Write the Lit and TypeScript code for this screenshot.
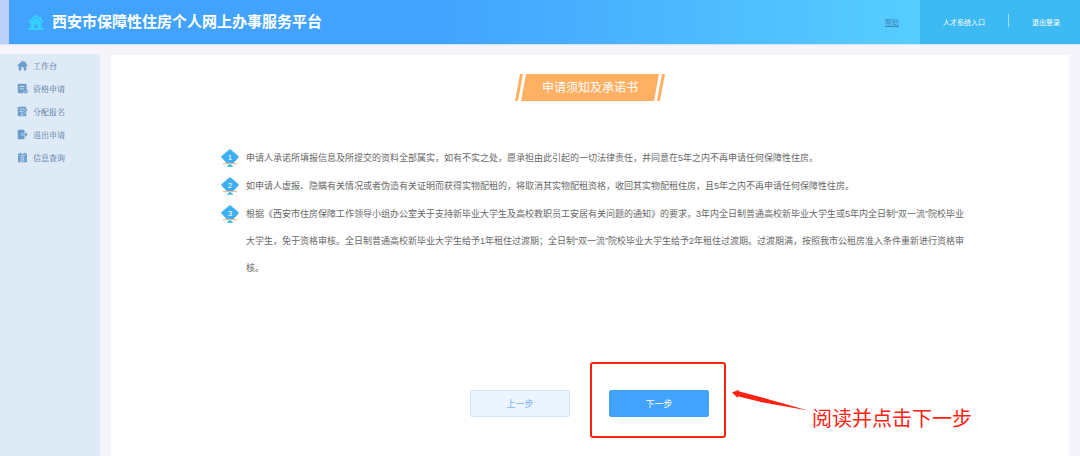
import { LitElement, html, css, svg } from "lit";
import { customElement } from "lit/decorators.js";

const house = svg`<path d="M8 .8.7 7.600c-.5.5-.2 1.100.4 1.100h1.300v5.600c0 .6.4.9.9.9h3V10.500h3.400v4.700h3c.5 0 .9-.3.9-.9V8.700h1.300c.6 0 .9-.6.4-1.100L13 5.300V2h-2v1.500z" fill="currentColor"/>`;

const menu = [
  { label: "工作台", icon: house },
  {
    label: "资格申请",
    icon: svg`<path d="M3 1h9a2 2 0 0 1 2 2v6l-4 1.500-1 4.500H3a2 2 0 0 1-2-2V3a2 2 0 0 1 2-2z" fill="currentColor"/>
      <path d="M4 5h7M4 8.500h6" stroke="#deeaf6" stroke-width="1.200"/>
      <circle cx="12.500" cy="12" r="3.200" fill="currentColor"/><path d="m10.800 12 1.400 1.400 2.300-2.400" stroke="#deeaf6" fill="none"/>`,
  },
  {
    label: "分配报名",
    icon: svg`<path d="M2.500 1H12a1.500 1.500 0 0 1 1.500 1.500V14a1 1 0 0 1-1 1h-10A1.500 1.500 0 0 1 1 13.500v-11A1.500 1.500 0 0 1 2.500 1z" fill="currentColor"/>
      <path d="M3.500 4.500h7M3.500 8h4" stroke="#deeaf6" stroke-width="1.200"/>
      <path d="m6 14 1-3.500 6.500-7 2.200 2L9.200 12.800z" fill="currentColor" stroke="#deeaf6" stroke-width=".9"/>`,
  },
  {
    label: "退出申请",
    icon: svg`<path d="M2 1h8a1 1 0 0 1 1 1v12a1 1 0 0 1-1 1H2a1 1 0 0 1-1-1V2a1 1 0 0 1 1-1z" fill="currentColor"/>
      <path d="M7 6.700h4.500V3.800L16 8l-4.500 4.200V9.300H7z" fill="currentColor" stroke="#deeaf6" stroke-width=".8"/>`,
  },
  {
    label: "信息查询",
    icon: svg`<path d="M1.500 2.500H4V1h2v1.500h4V1h2v1.500h2.500V15h-13z" fill="currentColor"/>
      <path d="M4 5h8" stroke="#deeaf6"/><circle cx="7.800" cy="9" r="2" fill="none" stroke="#deeaf6"/>
      <path d="m9.300 10.500 1.500 1.500M4.500 13h6" stroke="#deeaf6"/>`,
  },
];

const terms = [
  "申请人承诺所填报信息及所提交的资料全部属实，如有不实之处，愿承担由此引起的一切法律责任，并同意在5年之内不再申请任何保障性住房。",
  "如申请人虚报、隐瞒有关情况或者伪造有关证明而获得实物配租的，将取消其实物配租资格，收回其实物配租住房，且5年之内不再申请任何保障性住房。",
  "根据《西安市住房保障工作领导小组办公室关于支持新毕业大学生及高校教职员工安居有关问题的通知》的要求，3年内全日制普通高校新毕业大学生或5年内全日制“双一流”院校毕业大学生，免于资格审核。全日制普通高校新毕业大学生给予1年租住过渡期；全日制“双一流”院校毕业大学生给予2年租住过渡期。过渡期满，按照我市公租房准入条件重新进行资格审核。",
];

@customElement("app-root")
export class AppRoot extends LitElement {
  static styles = css`
    :host {
      display: flex;
      flex-direction: column;
      min-height: 100vh;
      background: #f4f4fa;
      font-family: "Liberation Sans", "Noto Sans CJK SC", sans-serif;
      font-size: 9px;
      color: #686868;
    }
    * { box-sizing: border-box; }
    a { color: inherit; text-decoration: none; }
    .header {
      display: flex;
      height: 44px;
      border-left: 9px solid #bccff8;
      background: linear-gradient(90deg, #42a3ff 40%, #56ceff 85%);
      box-shadow: 0 1px 0 #d6e6fa;
      color: #fff;
      font-size: 7px;
    }
    .brand {
      display: flex;
      align-items: center;
      flex: 1;
      gap: 8px;
      padding-left: 19px;
    }
    .logo { width: 16px; height: 16px; color: #30dcff; }
    .title {
      margin: 0;
      font-size: 15px;
      line-height: 20px;
      font-weight: 700;
    }
    .help {
      align-self: center;
      margin-right: 21px;
      color: #3c86c0;
      text-decoration: underline;
    }
    .account {
      display: flex;
      align-items: center;
      justify-content: space-between;
      width: 160px;
      padding: 0 20px 0 23px;
      background: #3ebaf2;
    }
    .divider { width: 1px; height: 13px; margin-bottom: 3px; background: #9fe0fc; }
    .body {
      display: flex;
      flex: 1;
      gap: 11px;
      padding: 10px 11px 0 0;
    }
    .sidebar { width: 100px; background: #deeaf6; }
    .menu { margin: 0; padding: 0; list-style: none; }
    .entry {
      display: flex;
      align-items: center;
      gap: 5px;
      height: 23px;
      padding-left: 17px;
      font-family: "Liberation Serif", "Noto Serif CJK SC", "Noto Sans CJK SC", serif;
      font-size: 8px;
      color: #4b729f;
    }
    .icon { width: 11px; height: 11px; color: #6d9fce; }
    .page {
      display: flex;
      flex-direction: column;
      align-items: center;
      flex: 1;
      min-width: 0;
      margin-top: 1px;
      padding-top: 19px;
      background: #fff;
    }
    .banner {
      display: flex;
      justify-content: center;
      gap: 2px;
      margin: 0;
      height: 27px;
      color: #fff;
      font-size: 12px;
      line-height: 28px;
      font-weight: 400;
    }
    .plate {
      width: 138px;
      text-align: center;
      background: #ffb062;
      clip-path: polygon(5px 0, 100% 0, calc(100% - 5px) 100%, 0 100%);
    }
    .slash {
      width: 8px;
      margin: 0 -4px;
      background: #ffb062;
      clip-path: polygon(5px 0, 100% 0, 3px 100%, 0 100%);
    }
    .terms {
      display: flex;
      flex-direction: column;
      gap: 1px;
      align-self: stretch;
      margin: 44px 0 0;
      padding: 0 103px 0 110px;
      list-style: none;
    }
    .term { display: flex; gap: 7px; line-height: 27px; }
    .text { margin: 0; flex: 1; }
    .badge { flex: none; width: 18px; height: 18px; margin-top: 4px; }
    .num { font-size: 8px; fill: #fff; text-anchor: middle; }
    .actions { display: flex; gap: 39px; margin: 108px 0 39px; padding-right: 1px; }
    .btn {
      width: 100px;
      height: 27px;
      padding: 0;
      border: 1px solid #d3e5ff;
      border-radius: 2px;
      background: #ebf4ff;
      color: #80b5f5;
      font: inherit;
    }
    .primary { border-color: #42a3ff; background: #42a3ff; color: #fff; }
    .target { position: relative; }
    .frame {
      position: absolute;
      inset: -28px -17px -21px -19px;
      border: 2px solid #ff2010;
      border-radius: 3px;
      pointer-events: none;
    }
    .arrow { position: absolute; left: 123px; top: -1px; width: 78px; height: 24px; }
    .hint {
      position: absolute;
      left: 203px;
      top: 15px;
      color: #ff2010;
      font-size: 20px;
      line-height: 28px;
      white-space: nowrap;
    }
  `;

  render() {
    return html`
      <header class="header">
        <div class="brand">
          <svg class="logo" viewBox="0 0 16 16" aria-hidden="true">
            <path d="M2.500 8v7h4v-4.500h3V15h4V8L8 3.600z" fill="currentColor" opacity=".8" />
            <path d="M.8 8 8 1.600 15.200 8M12.500 5V2.500M0 15h16" fill="none" stroke="currentColor" stroke-width="1.300" />
          </svg>
          <h1 class="title">西安市保障性住房个人网上办事服务平台</h1>
        </div>
        <a class="help" href="#help">帮助</a>
        <nav class="account">
          <a href="#talent">人才系统入口</a>
          <span class="divider"></span>
          <a href="#logout">退出登录</a>
        </nav>
      </header>
      <div class="body">
        <nav class="sidebar">
          <ul class="menu">
            ${menu.map(
              (m, i) => html`<li>
                <a class="entry" href="#menu-${i}">
                  <svg class="icon" viewBox="0 0 16 16" aria-hidden="true">${m.icon}</svg>
                  <span>${m.label}</span>
                </a>
              </li>`
            )}
          </ul>
        </nav>
        <main class="page">
          <h2 class="banner">
            <span class="slash"></span>
            <span class="plate">申请须知及承诺书</span>
            <span class="slash"></span>
          </h2>
          <ol class="terms">
            ${terms.map(
              (t, i) => html`<li class="term">
                <svg class="badge" viewBox="0 0 18 18">
                  <path d="M9 14.500 5.500 17.800h7z" fill="#35b8ef" />
                  <path d="M2 14.600h14" stroke="#f7b98a" stroke-width="1.200" />
                  <path d="M8 .7q1-.8 2 0l7.300 6.300q.9.900 0 1.800L12.500 13.900h-7L.7 8.800q-.9-.9 0-1.800z" fill="#3faff5" />
                  <text class="num" x="9" y="11">${i + 1}</text>
                </svg>
                <p class="text">${t}</p>
              </li>`
            )}
          </ol>
          <div class="actions">
            <button class="btn" type="button">上一步</button>
            <div class="target">
              <button class="btn primary" type="button">下一步</button>
              <span class="frame"></span>
              <svg class="arrow" viewBox="0 0 78 24" aria-hidden="true">
                <path d="M0 3.500 7 .8 6.500 2.200 31 8.800 76 21.500 30 13.200 5.800 7.200 5.800 9z" fill="#ff2010" />
              </svg>
              <span class="hint">阅读并点击下一步</span>
            </div>
          </div>
        </main>
      </div>
    `;
  }
}
